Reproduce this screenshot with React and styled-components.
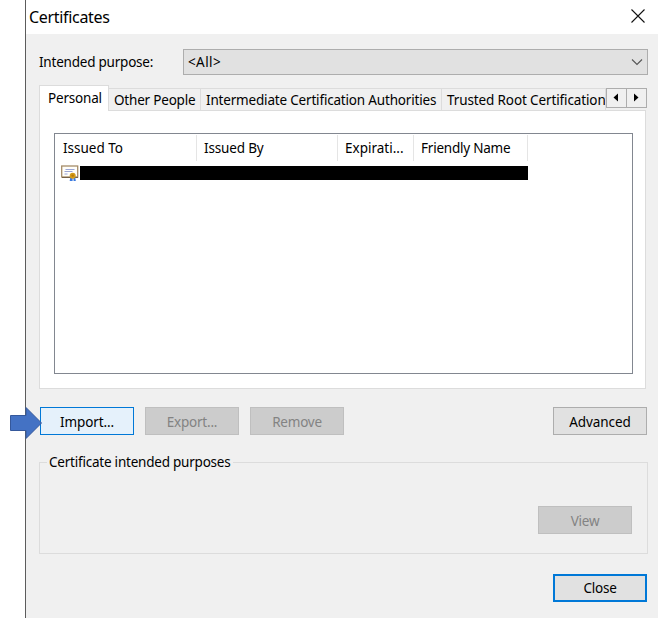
import React, { useState } from 'react';
import styled, { createGlobalStyle } from 'styled-components';

const face = '#f0f0f0';
const line = '#dcdcdc';
const blue = '#0078d7';

const GlobalStyle = createGlobalStyle`
  * {
    box-sizing: border-box;
  }

  body {
    margin: 0;
    background-color: white;
    color: black;
    font-family: 'Noto Sans', 'Open Sans', sans-serif;
    font-size: 13.5px;
    overflow: hidden;
  }
`;

const Page = styled.div`
  position: relative;
  width: 658px;
  height: 618px;
  padding-left: 25px;
`;

const Dialog = styled.div`
  display: flex;
  flex-direction: column;
  height: 100%;
  border-left: 1px solid #5c5c5c;
  background-color: ${face};
`;

const TitleBar = styled.div`
  display: flex;
  align-items: center;
  justify-content: space-between;
  height: 34px;
  padding: 0 13px 2px 3px;
  background-color: white;
`;

const Text = styled.span`
  display: inline-block;
  line-height: 18px;
  white-space: pre;
  letter-spacing: ${props => (props.$spacing === undefined ? -0.22 : props.$spacing)}px;
`;

const Title = styled(Text)`
  font-size: 16px;
  line-height: 22px;
  padding-top: 2px;
`;

const Content = styled.div`
  display: flex;
  flex-direction: column;
  padding: 15px 10px 0 13px;
`;

const PurposeRow = styled.div`
  display: flex;
  align-items: center;
  justify-content: space-between;
  height: 26px;
`;

const Select = styled.div`
  display: flex;
  align-items: center;
  justify-content: space-between;
  width: 465px;
  height: 26px;
  padding: 0 4px;
  border: 1px solid #adadad;
  background-color: #e1e1e1;
`;

const TabStrip = styled.div`
  display: flex;
  align-items: flex-end;
  height: 25px;
  margin-top: 10px;
`;

const Tab = styled.button`
  flex: none;
  width: ${props => props.$width}px;
  height: ${props => (props.$active ? 26 : 22)}px;
  margin: 0 0 ${props => (props.$active ? -1 : 0)}px;
  padding: ${props => (props.$active ? '3px 0 0 8px' : '2px 0 0 5px')};
  overflow: hidden;
  border: 1px solid ${line};
  border-left-width: ${props => (props.$active ? 1 : 0)}px;
  border-bottom: 0;
  background-color: ${props => (props.$active ? 'white' : face)};
  color: black;
  font: inherit;
  text-align: left;
  display: flex;
  align-items: flex-start;
  z-index: 1;
`;

const Scroller = styled.div`
  display: flex;
  align-self: flex-start;
  margin-top: 3px;
`;

const ScrollButton = styled.button`
  display: flex;
  align-items: center;
  justify-content: center;
  width: 21px;
  height: 20px;
  margin: 0 0 0 ${props => (props.$joined ? -1 : 0)}px;
  padding: 0 1px 1px 0;
  border: 1px solid #adadad;
  background-color: ${face};
`;

const Panel = styled.div`
  width: 607px;
  height: 279px;
  padding: 22px 12px 0 14px;
  border: 1px solid ${line};
  background-color: white;
`;

const List = styled.div`
  width: 579px;
  height: 241px;
  padding-top: 1px;
  border: 1px solid #828790;
  background-color: white;
`;

const ListHeader = styled.div`
  display: flex;
  height: 26px;
`;

const Column = styled.div`
  width: ${props => props.$width}px;
  padding: 4px 0 0 ${props => props.$indent || 7}px;
  border-right: 1px solid #e5e5e5;
`;

const Certificate = styled.div`
  display: flex;
  align-items: flex-start;
  padding: 4px 0 0 6px;
`;

const Redaction = styled.div`
  width: 448px;
  height: 14px;
  margin: 1px 0 0 1px;
  background-color: black;
`;

const Actions = styled.div`
  display: flex;
  gap: 11px;
  height: 28px;
  margin: 18px 1px 0 1px;
`;

const Button = styled.button`
  display: flex;
  align-items: center;
  justify-content: center;
  width: 94px;
  height: 28px;
  padding: 1px 0 0;
  border: 1px solid #adadad;
  background-color: #e1e1e1;
  color: black;
  font: inherit;

  &:disabled {
    border-color: #bfbfbf;
    background-color: #cccccc;
    color: #838383;
  }
`;

const HotButton = styled(Button)`
  border-color: ${blue};
  background-color: #e5f1fb;
`;

const DefaultButton = styled(Button)`
  align-self: flex-end;
  margin: 20px 1px 0 0;
  padding: 0;
  border: 2px solid ${blue};
`;

const PushRight = styled.div`
  margin-left: auto;
`;

const Group = styled.fieldset`
  display: flex;
  justify-content: flex-end;
  height: 101px;
  margin: 18px 0 0;
  padding: 35px 15px 0 0;
  border: 1px solid ${line};

  legend {
    height: 18px;
    margin-left: 7px;
    padding: 0 2px;
  }
`;

const ArrowSvg = styled.svg`
  position: absolute;
  left: 9px;
  top: 405px;
`;

const CloseIcon = () => (
  <svg width="14" height="14" viewBox="0 0 14 14">
    <path d="M.5 .5l13 13M13.5 .5l-13 13" fill="none" stroke="#111" strokeWidth="1.1" />
  </svg>
);

const Chevron = () => (
  <svg width="12" height="8" viewBox="0 0 12 8">
    <path d="M1 1.5l5 5 5-5" fill="none" stroke="#555" strokeWidth="1.1" />
  </svg>
);

const Triangle = ({ right }) => (
  <svg width="6" height="10" viewBox="0 0 6 10">
    <path d={right ? 'M1 .5v8l4.5-4z' : 'M5 .5v8L.5 4.5z'} />
  </svg>
);

const CertificateIcon = () => (
  <svg width="18" height="17" viewBox="0 0 18 17">
    <rect x=".7" y="1" width="16" height="11" fill="#fffefa" stroke="#a58c68" strokeWidth="1.3" />
    <path d="M1 12.5h16" stroke="#756046" />
    <path d="M4.5 4.5h9M3.5 6.5h8M3.5 9h3" stroke="#8f9bd0" strokeWidth=".9" />
    <path d="M9.3 12h2.3v4H8.7zM12.3 12h1.9l.6 4h-2.2z" fill="#3979e0" />
    <circle cx="11.7" cy="10.8" r="3" fill="#d39a16" />
    <circle cx="11.7" cy="10.6" r="1.2" fill="#b87808" />
  </svg>
);

const PointerArrow = () => (
  <ArrowSvg width="35" height="36" viewBox="0 0 35 36">
    <path d="M1.5 10.5h15.5V2.5L32.5 18 17 33.5v-8H1.5z" fill="#4472c4" stroke="#35589b" />
  </ArrowSvg>
);

const tabs = [
  { label: 'Personal', width: 70, spacing: -0.2 },
  { label: 'Other People', width: 92, spacing: -0.2 },
  { label: 'Intermediate Certification Authorities', width: 241, spacing: -0.18 },
  { label: 'Trusted Root Certification', width: 164, spacing: -0.12 },
];

const columns = [
  { label: 'Issued To', width: 142, indent: 8, spacing: 0 },
  { label: 'Issued By', width: 141, spacing: -0.15 },
  { label: 'Expirati...', width: 76, spacing: 0 },
  { label: 'Friendly Name', width: 114 },
];

function App() {
  const [active, setActive] = useState(0);

  return (
    <Page>
      <GlobalStyle />
      <Dialog>
        <TitleBar>
          <Title $spacing={-0.32}>Certificates</Title>
          <CloseIcon />
        </TitleBar>
        <Content>
          <PurposeRow>
            <Text>Intended purpose:</Text>
            <Select>
              <Text $spacing={0.4}>{'<All>'}</Text>
              <Chevron />
            </Select>
          </PurposeRow>
          <TabStrip>
            {tabs.map((tab, i) => (
              <Tab key={tab.label} $width={tab.width} $active={i === active} onClick={() => setActive(i)}>
                <Text $spacing={tab.spacing}>{tab.label}</Text>
              </Tab>
            ))}
            <Scroller>
              <ScrollButton><Triangle /></ScrollButton>
              <ScrollButton $joined><Triangle right /></ScrollButton>
            </Scroller>
          </TabStrip>
          <Panel>
            <List>
              <ListHeader>
                {columns.map(col => (
                  <Column key={col.label} $width={col.width} $indent={col.indent}>
                    <Text $spacing={col.spacing}>{col.label}</Text>
                  </Column>
                ))}
              </ListHeader>
              <Certificate>
                <CertificateIcon />
                <Redaction />
              </Certificate>
            </List>
          </Panel>
          <Actions>
            <HotButton><Text $spacing={-0.1}>Import...</Text></HotButton>
            <Button disabled><Text>Export...</Text></Button>
            <Button disabled><Text>Remove</Text></Button>
            <PushRight>
              <Button><Text $spacing={-0.1}>Advanced</Text></Button>
            </PushRight>
          </Actions>
          <Group>
            <legend><Text>Certificate intended purposes</Text></legend>
            <Button disabled><Text>View</Text></Button>
          </Group>
          <DefaultButton><Text>Close</Text></DefaultButton>
        </Content>
      </Dialog>
      <PointerArrow />
    </Page>
  );
}

export default App;
